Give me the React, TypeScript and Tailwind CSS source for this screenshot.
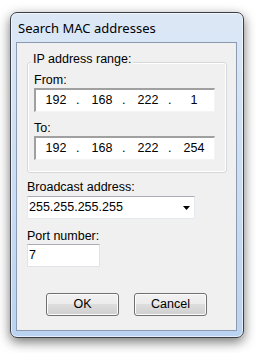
import { Fragment } from "react";

const body = "font-['Liberation_Sans',Arial,sans-serif] text-[12.5px] leading-[15px] text-black";

function IpBox({ values }: { values: string[] }) {
  return (
    <div className="flex h-[24px] w-[181px] items-center border-l-2 border-t-2 border-r border-b border-l-[#a0a0a0] border-t-[#a0a0a0] border-r-[#f4f4f4] border-b-[#f4f4f4] bg-white">
      {values.map((v, i) => (
        <Fragment key={i}>
          <span className="w-[40px] text-center">{v}</span>
          {i < 3 && <span className="w-[6px]">.</span>}
        </Fragment>
      ))}
    </div>
  );
}

function Button({ label }: { label: string }) {
  return (
    <button className="flex h-[23px] w-[73px] items-center justify-center rounded-[3px] border border-[#707070] bg-[linear-gradient(#f2f2f2_0%,#ebebeb_50%,#dddddd_50%,#cfcfcf_100%)] shadow-[inset_0_0_0_1px_#fcfcfc]">
      {label}
    </button>
  );
}

export default function App() {
  return (
    <div className={`h-[353px] w-[256px] bg-white pl-[10px] pt-[12px] ${body}`}>
      <div className="flex w-[234px] flex-col rounded-[7px] border border-[#3c3f45] bg-[linear-gradient(180deg,#dce8f6_0%,#cfe0f4_40%,#bad3f0_100%)] shadow-[0_4px_12px_rgba(0,0,0,0.55),inset_0_0_0_1px_rgba(255,255,255,0.6)]">
        <div className="h-[29px] pl-[7px] pt-[8px] font-['Noto_Sans','Open_Sans',sans-serif] text-[13px] leading-[15px]">
          Search MAC addresses
        </div>
        <div className="mb-[6px] ml-[5px] mr-[6px] flex flex-col border border-[#8b9cb2] bg-[#f0f0f0] px-[10px] pb-[14px] pt-[19px]">
          <div className="relative w-[200px] rounded-[3px] border border-[#d5d9dc] pb-[12px] pl-[6px] pt-[10px] shadow-[inset_0_0_0_1px_#ffffff]">
            <span className="absolute -top-[11px] left-[3px] bg-[#f0f0f0] px-[2px]">IP address range:</span>
            <div>From:</div>
            <IpBox values={["192", "168", "222", "1"]} />
            <div className="mt-[9px]">To:</div>
            <IpBox values={["192", "168", "222", "254"]} />
          </div>
          <div className="mt-[7px]">Broadcast address:</div>
          <div className="mt-[1px] flex h-[23px] w-[168px] items-center justify-between border border-[#e3e9ef] border-t-[#abadb3] bg-white pl-[1px] pr-[4px]">
            <span>255.255.255.255</span>
            <svg width="7" height="4" viewBox="0 0 7 4">
              <path d="M0 0H7L3.5 4Z" fill="#000" />
            </svg>
          </div>
          <div className="mt-[10px]">Port number:</div>
          <div className="flex h-[23px] w-[73px] items-center border border-[#e2e3ea] border-t-[#abadb3] bg-white pl-[1px]">
            7
          </div>
          <div className="mt-[26px] flex justify-center gap-[15px]">
            <Button label="OK" />
            <Button label="Cancel" />
          </div>
        </div>
      </div>
    </div>
  );
}
